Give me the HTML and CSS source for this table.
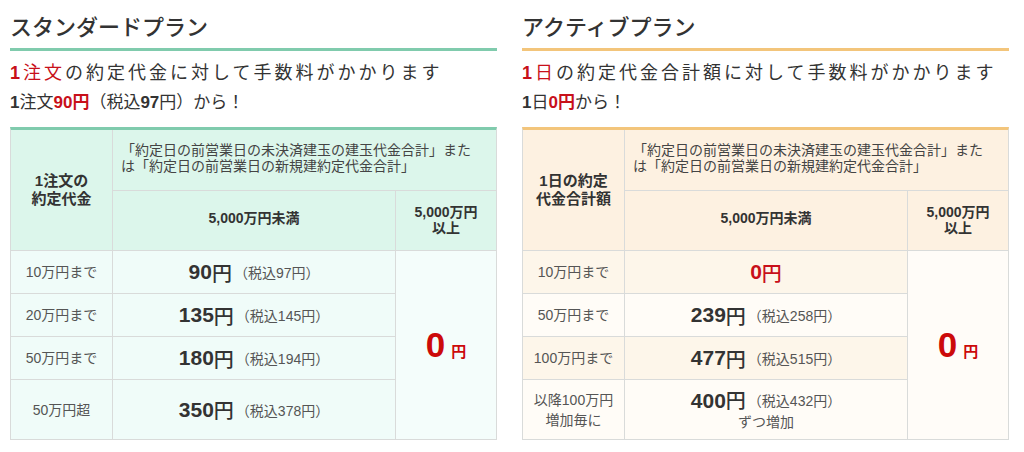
FILE: index.html
```html
<!DOCTYPE html>
<html lang="ja">
<head>
<meta charset="utf-8">
<title>手数料プラン</title>
<link rel="stylesheet" href="styles.css">
</head>
<body>
<div class="page">
  <section class="plan plan-standard">
    <h2 class="plan-title">スタンダードプラン</h2>
    <p class="lead"><span class="red"><b>1</b>注文</span>の約定代金に対して手数料がかかります</p>
    <p class="sub"><b>1</b>注文<b class="red">90円</b>（税込<b>97</b>円）から！</p>
    <div class="fee-table">
      <div class="cell head h-label">1注文の<br>約定代金</div>
      <div class="cell head h-basis">「約定日の前営業日の未決済建玉の建玉代金合計」また<br>は「約定日の前営業日の新規建約定代金合計」</div>
      <div class="cell head h-under">5,000万円未満</div>
      <div class="cell head h-over">5,000万円<br>以上</div>

      <div class="cell range">10万円まで</div>
      <div class="cell fee"><b class="num">90</b><span class="yen">円</span><span class="tax">（税込97円）</span></div>
      <div class="cell range">20万円まで</div>
      <div class="cell fee"><b class="num">135</b><span class="yen">円</span><span class="tax">（税込145円）</span></div>
      <div class="cell range">50万円まで</div>
      <div class="cell fee"><b class="num">180</b><span class="yen">円</span><span class="tax">（税込194円）</span></div>
      <div class="cell range">50万円超</div>
      <div class="cell fee"><b class="num">350</b><span class="yen">円</span><span class="tax">（税込378円）</span></div>

      <div class="cell free"><b class="big-zero">0</b><b class="big-yen">円</b></div>
    </div>
  </section>

  <section class="plan plan-active">
    <h2 class="plan-title">アクティブプラン</h2>
    <p class="lead"><span class="red"><b>1</b>日</span>の約定代金合計額に対して手数料がかかります</p>
    <p class="sub"><b>1</b>日<b class="red">0円</b>から！</p>
    <div class="fee-table">
      <div class="cell head h-label">1日の約定<br>代金合計額</div>
      <div class="cell head h-basis">「約定日の前営業日の未決済建玉の建玉代金合計」また<br>は「約定日の前営業日の新規建約定代金合計」</div>
      <div class="cell head h-under">5,000万円未満</div>
      <div class="cell head h-over">5,000万円<br>以上</div>

      <div class="cell range alt">10万円まで</div>
      <div class="cell fee alt"><b class="num red">0</b><span class="yen red">円</span></div>
      <div class="cell range">50万円まで</div>
      <div class="cell fee"><b class="num">239</b><span class="yen">円</span><span class="tax">（税込258円）</span></div>
      <div class="cell range alt">100万円まで</div>
      <div class="cell fee alt"><b class="num">477</b><span class="yen">円</span><span class="tax">（税込515円）</span></div>
      <div class="cell range">以降100万円<br>増加毎に</div>
      <div class="cell fee fee-2"><span class="fee-line"><b class="num">400</b><span class="yen">円</span><span class="tax">（税込432円）</span></span><span class="note">ずつ増加</span></div>

      <div class="cell free"><b class="big-zero">0</b><b class="big-yen">円</b></div>
    </div>
  </section>
</div>
</body>
</html>
```

FILE: styles.css
```css
* { box-sizing: border-box; }

html, body {
  margin: 0;
  padding: 0;
  background: #ffffff;
}

body {
  font-family: "Liberation Sans", "Noto Sans CJK JP", sans-serif;
  color: #333333;
}

.page {
  display: flex;
  gap: 25px;
  padding: 0 10px;
}

.plan {
  width: 487px;
  flex: none;
}

.plan-standard { --accent: #80cbad; --head-bg: #dcf6eb; --body-bg: #f0fcf9; --alt-bg: #f0fcf9; --free-bg: #f4fdfb; }
.plan-active   { --accent: #f3c57b; --head-bg: #fdf1e1; --body-bg: #fffcf7; --alt-bg: #fdf6ea; --free-bg: #fffcf8; }

.plan-title {
  margin: 0;
  padding: 13px 0 5px;
  font-size: 22px;
  line-height: 30px;
  font-weight: 500;
  color: #333333;
  border-bottom: 3px solid var(--accent);
}

.lead {
  margin: 8px 0 0;
  font-size: 18px;
  line-height: 28px;
  letter-spacing: 3px;
  color: #333333;
}

.sub {
  margin: 0;
  font-size: 17px;
  line-height: 32px;
  color: #333333;
}

.red { color: #c8101a; }

.fee-table {
  margin-top: 8px;
  display: grid;
  grid-template-columns: 101px 282px 100px;
  grid-template-rows: 60px 59px 42px 42px 42px 59px;
  gap: 1px;
  background: #d9dbda;
  border: 1px solid #d9dbda;
  border-top: 3px solid var(--accent);
}

.cell {
  display: flex;
  align-items: center;
  justify-content: center;
  text-align: center;
  background: var(--body-bg);
}

.cell.alt { background: var(--alt-bg); }

.head {
  background: var(--head-bg);
  font-weight: bold;
  font-size: 15px;
  line-height: 18px;
  color: #333333;
}

.h-label {
  grid-column: 1;
  grid-row: 1 / span 2;
}

.h-basis {
  grid-column: 2 / span 2;
  grid-row: 1;
  justify-content: flex-start;
  text-align: left;
  padding: 0 0 4px 8px;
  font-weight: normal;
  font-size: 14px;
  line-height: 16px;
  color: #444444;
}

.h-under { font-size: 14px; padding-bottom: 6px; }
.h-over { font-size: 14px; line-height: 16px; padding-bottom: 2px; }

.range {
  font-size: 14px;
  line-height: 20px;
  color: #555555;
}

.fee { align-items: center; }

.num {
  font-size: 21px;
  font-weight: bold;
  color: #333333;
}

.yen {
  font-size: 20px;
  font-weight: 500;
  color: #333333;
}

.num.red, .yen.red { color: #c8101a; }

.tax {
  font-size: 14px;
  color: #555555;
  margin-left: 2px;
}

.fee-2 {
  flex-direction: column;
  justify-content: center;
}

.fee-line {
  display: flex;
  align-items: center;
  line-height: 24px;
}

.note {
  font-size: 14px;
  line-height: 18px;
  color: #555555;
}

.free {
  grid-column: 3;
  grid-row: 3 / span 4;
  background: var(--free-bg);
  align-items: baseline;
  align-content: center;
  flex-wrap: wrap;
}

.big-zero {
  font-size: 35px;
  line-height: 40px;
  color: #cc0a0a;
}

.big-yen {
  font-size: 15px;
  color: #cc0a0a;
  margin-left: 6px;
}
```
